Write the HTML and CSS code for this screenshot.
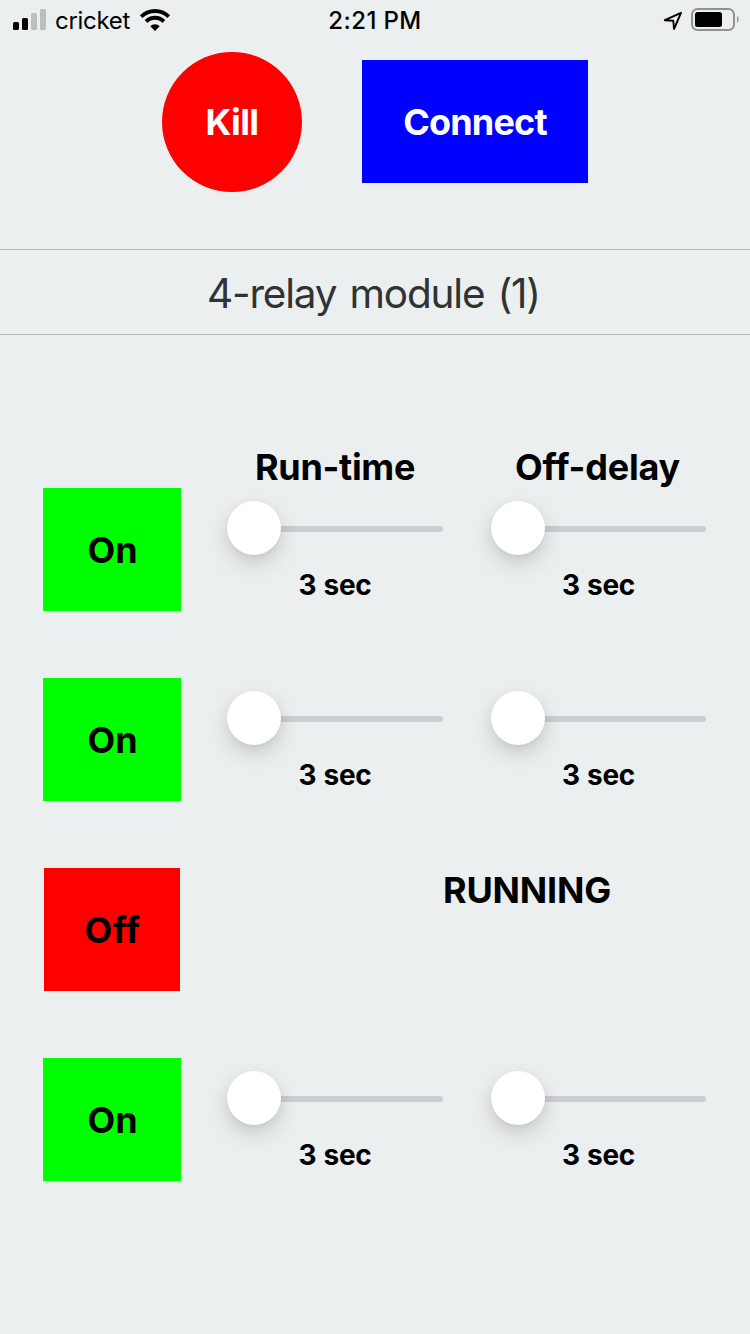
FILE: index.html
```html
<!DOCTYPE html>
<html lang="en">
<head>
<meta charset="utf-8">
<title>4-relay module</title>
<link rel="stylesheet" href="styles.css">
</head>
<body>
<header class="status">
  <div class="status-left">
    <svg class="signal" width="34" height="22" viewBox="0 0 34 22"><rect x="0" y="13" width="6" height="8" rx="1.6"/><rect x="9" y="9" width="6" height="12" rx="1.6"/><g fill="#bbbfbf"><rect x="18" y="4" width="6" height="17" rx="1.6"/><rect x="27" y="0" width="6" height="21" rx="1.6"/></g></svg>
    <span class="carrier">cricket</span>
    <svg class="wifi" width="30" height="22" viewBox="0 0 30 22"><g fill="none" stroke="#000" stroke-width="3.9"><path d="M1.3 7.7a19.4 19.4 0 0 1 27.4 0"/><path d="M6.1 12.5a12.6 12.6 0 0 1 17.8 0"/></g><path d="M15 22l-4.7-4.8a6.7 6.7 0 0 1 9.4 0z"/></svg>
  </div>
  <span class="clock">2:21 PM</span>
  <div class="status-right">
    <svg class="location" width="20" height="20" viewBox="0 0 20 20"><path d="M1.800 9.200L18 1.800 11 18 10.300 9.800z" fill="none" stroke="#000" stroke-width="1.900" stroke-linejoin="round"/></svg>
    <svg class="battery" width="48" height="24" viewBox="0 0 48 24"><rect x="1" y="1" width="42" height="21" rx="5.500" fill="none" stroke="#8f9292" stroke-width="2"/><rect x="4" y="4" width="27" height="15" rx="2.500"/><path d="M46 8a4.600 4.600 0 0 1 0 7z" fill="#8f9292"/></svg>
  </div>
</header>
<section class="top-actions">
  <button class="kill">Kill</button>
  <button class="connect">Connect</button>
</section>
<h1 class="title">4-relay module (1)</h1>
<main class="relays">
  <div class="relay labels">
    <h2 class="run-label">Run-time</h2><h2 class="delay-label">Off-delay</h2>
  </div>
  <div class="relay">
    <button class="toggle on">On</button>
    <div class="control"><div class="slider"><i class="thumb"></i><i class="track"></i></div><p class="value">3 sec</p></div>
    <div class="control delay"><div class="slider"><i class="thumb"></i><i class="track"></i></div><p class="value">3 sec</p></div>
  </div>
  <div class="relay">
    <button class="toggle on">On</button>
    <div class="control"><div class="slider"><i class="thumb"></i><i class="track"></i></div><p class="value">3 sec</p></div>
    <div class="control delay"><div class="slider"><i class="thumb"></i><i class="track"></i></div><p class="value">3 sec</p></div>
  </div>
  <div class="relay">
    <button class="toggle off">Off</button>
    <p class="running">RUNNING</p>
  </div>
  <div class="relay">
    <button class="toggle on">On</button>
    <div class="control"><div class="slider"><i class="thumb"></i><i class="track"></i></div><p class="value">3 sec</p></div>
    <div class="control delay"><div class="slider"><i class="thumb"></i><i class="track"></i></div><p class="value">3 sec</p></div>
  </div>
</main>
</body>
</html>
```
FILE: styles.css
```css
* { box-sizing: border-box; margin: 0; padding: 0; }
body {
  width: 750px;
  height: 1334px;
  overflow: hidden;
  background: #ebeff0;
  color: #000;
  font-family: Inter, "Liberation Sans", sans-serif;
}
svg { display: block; flex: none; }
button { border: 0; font: 700 36px/1 Inter, "Liberation Sans", sans-serif; white-space: nowrap; }

.status {
  display: grid;
  grid-template-columns: 1fr auto 1fr;
  align-items: center;
  height: 40px;
  padding: 0 11px 4px 13px;
  font-size: 24px;
  line-height: 36px;
}
.status-left, .status-right { display: flex; align-items: center; }
.status-right { justify-content: flex-end; gap: 8px; }
.location { margin-top: 2px; }
.carrier { width: 77px; margin: 3px 8px 0 8px; letter-spacing: -0.3px; }
.wifi { margin-top: 1px; }
.clock { font-weight: 500; font-size: 24px; padding: 3px 2px 0 0; letter-spacing: 0.4px; }

.top-actions {
  display: flex;
  justify-content: center;
  align-items: flex-start;
  gap: 60px;
  height: 140px;
  margin: 12px 0 57px;
}
.kill { width: 140px; height: 140px; border-radius: 50%; background: #f00; color: #fff; letter-spacing: -0.6px; }
.connect { width: 226px; height: 123px; margin-top: 8px; padding-top: 1px; background: #00f; color: #fff; letter-spacing: -0.8px; }

.title {
  height: 86px;
  padding: 1px 3px 0 0;
  border: solid #b8bcbd;
  border-width: 1px 0;
  color: #303333;
  font-size: 40.5px;
  font-weight: 400;
  line-height: 86px;
  letter-spacing: -1.2px;
  word-spacing: 3px;
  text-align: center;
}

.relays { display: flex; flex-direction: column; gap: 67px; padding: 112px 44px 0 43px; }
.relay {
  display: grid;
  flex: none;
  grid-template-columns: 138px 216px 215px;
  justify-content: start;
  column-gap: 46px;
  height: 123px;
}
.delay { margin: 0 -2px 0 2px; }
.labels { height: 40px; margin-bottom: -66px; }
.labels h2 { font-size: 36px; font-weight: 700; line-height: 40px; letter-spacing: -0.3px; text-align: center; white-space: nowrap; }
.run-label { grid-column: 2; }
.labels .delay-label { grid-column: 3; margin: 0 0 0 2px; letter-spacing: -0.2px; }
.toggle { width: 138px; height: 123px; color: #000; }
.on { padding-left: 1px; background: #0f0; }
.off { width: 136px; margin-left: 1px; padding-left: 1px; background: #f00; letter-spacing: 0.3px; }
.control { padding-top: 13px; }
.slider { display: flex; align-items: center; height: 54px; }
.thumb {
  z-index: 1;
  width: 54px;
  height: 54px;
  border-radius: 50%;
  background: #fff;
  box-shadow: 0 9px 24px rgba(0, 0, 0, .13), 0 5px 12px rgba(0, 0, 0, .06), 0 1px 2px rgba(0, 0, 0, .04);
}
.track { flex: 1; height: 6px; margin: 2px 0 0 -4px; border-radius: 3px; background: #cbced0; }
.value { margin-top: 10px; font-size: 28px; font-weight: 700; line-height: 40px; letter-spacing: -0.3px; word-spacing: 1px; text-align: center; }
.running { grid-column: 2 / 4; justify-self: center; margin: 2px 0 0 123px; font-size: 36px; font-weight: 700; line-height: 40px; letter-spacing: -0.2px; }
```
